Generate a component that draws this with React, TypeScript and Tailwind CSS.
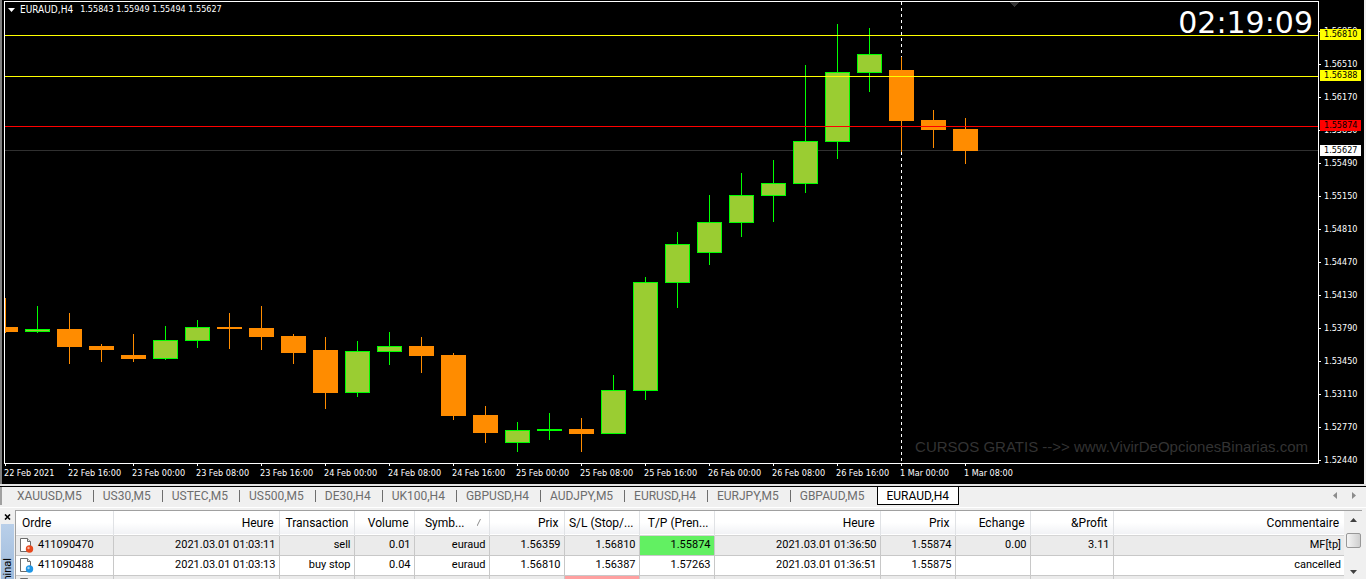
import React, { useState } from 'react';
import clsx from 'clsx';

// center x is 32px apart, all y values are measured from the top of the plot
type Candle = [up: boolean, high: number, top: number, bottom: number, low: number];

const CANDLES: Candle[] = [
  [false, 296, 325, 330, 331],
  [true, 304, 327, 330, 331],
  [false, 311, 327, 345, 362],
  [false, 342, 344, 348, 360],
  [false, 332, 353, 357, 360],
  [true, 324, 338, 357, 358],
  [true, 318, 325, 339, 346],
  [false, 311, 325, 327, 347],
  [false, 304, 326, 335, 348],
  [false, 332, 334, 351, 362],
  [false, 335, 348, 391, 407],
  [true, 339, 349, 391, 395],
  [true, 330, 344, 350, 363],
  [false, 335, 344, 354, 371],
  [false, 351, 353, 414, 418],
  [false, 404, 413, 431, 441],
  [true, 420, 428, 441, 450],
  [true, 411, 427, 429, 438],
  [false, 416, 427, 432, 450],
  [true, 373, 388, 432, 432],
  [true, 275, 280, 389, 398],
  [true, 230, 242, 281, 306],
  [true, 193, 220, 251, 263],
  [true, 171, 193, 221, 235],
  [true, 158, 181, 194, 220],
  [true, 63, 139, 182, 191],
  [true, 22, 70, 140, 157],
  [true, 26, 52, 71, 90],
  [false, 55, 68, 119, 150],
  [false, 108, 118, 128, 146],
  [false, 116, 127, 149, 162],
];

const PRICES = [
  '1.56850', '1.56510', '1.56170', '1.55830', '1.55490', '1.55150', '1.54810',
  '1.54470', '1.54130', '1.53790', '1.53450', '1.53110', '1.52770', '1.52440',
];

const TIMES = [
  '22 Feb 2021', '22 Feb 16:00', '23 Feb 00:00', '23 Feb 08:00', '23 Feb 16:00', '24 Feb 00:00',
  '24 Feb 08:00', '24 Feb 16:00', '25 Feb 00:00', '25 Feb 08:00', '25 Feb 16:00', '26 Feb 00:00',
  '26 Feb 08:00', '26 Feb 16:00', '1 Mar 00:00', '1 Mar 08:00',
];

const TABS = [
  'XAUUSD,M5', 'US30,M5', 'USTEC,M5', 'US500,M5', 'DE30,H4', 'UK100,H4',
  'GBPUSD,H4', 'AUDJPY,M5', 'EURUSD,H4', 'EURJPY,M5', 'GBPAUD,M5', 'EURAUD,H4',
];

const COLUMNS = [
  { label: 'Ordre', width: 'w-[97px]' },
  { label: 'Heure', width: 'w-[166px]' },
  { label: 'Transaction', width: 'w-[75px]' },
  { label: 'Volume', width: 'w-[60px]' },
  { label: 'Symb...', width: 'w-[75px]', sorted: true },
  { label: 'Prix', width: 'w-[75px]' },
  { label: 'S/L (Stop/...', width: 'w-[75px]' },
  { label: 'T/P (Pren...', width: 'w-[75px]' },
  { label: 'Heure', width: 'w-[166px]' },
  { label: 'Prix', width: 'w-[75px]' },
  { label: 'Echange', width: 'w-[75px]' },
  { label: '&Profit', width: 'w-[83px]' },
  { label: 'Commentaire', width: 'w-auto' },
];

const ORDERS = [
  {
    color: '#e8481c',
    cells: ['411090470', '2021.03.01 01:03:11', 'sell', '0.01', 'euraud', '1.56359', '1.56810', '1.55874', '2021.03.01 01:36:50', '1.55874', '0.00', '3.11', 'MF[tp]'],
    marks: { 7: 'bg-[#62f062]' } as Record<number, string>,
  },
  {
    color: '#1e96e6',
    cells: ['411090488', '2021.03.01 01:03:13', 'buy stop', '0.04', 'euraud', '1.56810', '1.56387', '1.57263', '2021.03.01 01:36:51', '1.55875', '', '', 'cancelled'],
    marks: {} as Record<number, string>,
  },
  {
    color: '#e8481c',
    cells: ['', '', '', '', '', '', '', '', '', '', '', '', ''],
    marks: { 6: 'bg-[#ffa0a0]' } as Record<number, string>,
  },
];

const OrderIcon = ({ color }: { color: string }) => (
  <svg width="15" height="16" viewBox="0 0 15 16" className="shrink-0">
    <path d="M1.5 1.5h7l3 3v10h-10z" fill="#fff" stroke="#6b6b6b" />
    <path d="M8.5 1.5v3h3" fill="#e4e4e4" stroke="#6b6b6b" />
    <circle cx="10.5" cy="12" r="3.7" fill={color} />
    <circle cx="9.5" cy="11" r="1.2" fill="#fff" opacity="0.6" />
  </svg>
);

const Candles = () => (
  <svg className="block w-full h-full" shapeRendering="crispEdges">
    <rect x="0" y="148" width="100%" height="1" fill="#303030" />
    <line x1="896.5" y1="0" x2="896.5" y2="461" stroke="#fff" strokeDasharray="3 3" />
    <path d="M1005 0h9v1h-1v1h-1v1h-1v1h-1v1h-1v-1h-1v-1h-1v-1h-1v-1h-1z" fill="#333" />
    {CANDLES.map(([up, high, top, bottom, low], i) => {
      const x = i * 32;
      return (
        <g key={i}>
          <rect x={x} y={high} width="1" height={low - high} fill={up ? '#00ff00' : '#ff8c00'} />
          <rect x={x - 12} y={top} width="25" height={bottom - top} fill={up ? '#00ff00' : '#ff8c00'} />
          {up && bottom - top > 2 && (
            <rect x={x - 11} y={top + 1} width="23" height={bottom - top - 2} fill="#9acd32" />
          )}
        </g>
      );
    })}
    <rect x="0" y="33" width="100%" height="1" fill="#ffff00" />
    <rect x="0" y="74" width="100%" height="1" fill="#ffff00" />
    <rect x="0" y="124" width="100%" height="1" fill="#ff0000" />
  </svg>
);

const PriceAxis = () => (
  <div className="relative pt-[14px] h-[483px]">
    {PRICES.map((price) => (
      <div key={price} className="h-[33px] flex items-center gap-[3px]">
        <span className="w-[2px] h-px bg-white" />
        <span>{price}</span>
      </div>
    ))}
    <span className="absolute left-px top-[28px] w-[41px] h-[11px] pl-1 bg-[#ffff00] text-black">1.56810</span>
    <span className="absolute left-px top-[69px] w-[41px] h-[11px] pl-1 bg-[#ffff00] text-black">1.56388</span>
    <span className="absolute left-px top-[119px] w-[41px] h-[11px] pl-1 bg-[#ff0000] text-black">1.55874</span>
    <span className="absolute left-px top-[144px] w-[41px] h-[11px] pl-1 bg-white text-black">1.55627</span>
  </div>
);

const Chart = () => (
  <section className="shrink-0 border-l-2 border-l-[#808080] border-r-2 border-r-[#f0f0f0] bg-black text-white pl-[2px] pt-px grid grid-cols-[minmax(0,1fr)_45px] font-['DejaVu_Sans_Condensed','Noto_Sans',sans-serif] text-[9px] leading-[11px] whitespace-nowrap">
    <div>
      <div className="relative h-[463px] border border-white">
        <Candles />
        <div className="absolute left-[3px] top-[2px] flex items-center gap-[5px]">
          <svg width="7" height="4" viewBox="0 0 7 4">
            <path d="M0 0h7L3.5 4z" fill="#fff" />
          </svg>
          <span className="text-[10px]">EURAUD,H4</span>
          <span className="pl-[2px]">1.55843 1.55949 1.55494 1.55627</span>
        </div>
        <div className="absolute right-[5px] top-[3px] font-['DejaVu_Sans',sans-serif] text-[30px] leading-9">02:19:09</div>
        <div className="absolute right-[10px] bottom-[6px] font-['Liberation_Sans',sans-serif] text-[15px] leading-5 text-[#333]">
          CURSOS GRATIS --&gt;&gt; www.VivirDeOpcionesBinarias.com
        </div>
      </div>
      <div className="h-5 flex">
        {TIMES.map((time) => (
          <div key={time} className="w-16 shrink-0">
            <div className="ml-px w-px h-[2px] bg-white" />
            <div className="pt-[2px]">{time}</div>
          </div>
        ))}
      </div>
    </div>
    <PriceAxis />
  </section>
);

const ChartTabs = () => {
  const [active, setActive] = useState('EURAUD,H4');

  return (
    <nav className="shrink-0 h-[26px] border-t-2 border-t-[#e3e3e3] bg-[#f0f0f0] text-xs text-[#6d6d6d]">
      <div className="flex h-[22px] border-t border-black border-b border-b-white">
        <div className="flex h-[18px] pl-[6px] flex-1 border-l-2 border-l-[#a0a0a0]">
          {TABS.map((tab, i) => (
            <button
              key={tab}
              onClick={() => setActive(tab)}
              className={clsx(
                'flex items-center',
                tab === active ? 'px-[9px] bg-white text-black border-x border-b border-black' : 'pl-[9px]',
              )}
            >
              {tab}
              {tab !== active && (
                <span className={clsx('ml-[11px] w-px h-3', TABS[i + 1] !== active && 'bg-[#6d6d6d]')} />
              )}
            </button>
          ))}
        </div>
        <div className="flex items-center gap-[15px] pr-[10px] pb-1">
          <button aria-label="Previous" className="w-1">
            <svg width="4" height="7" viewBox="0 0 4 7"><path d="M4 0v7L0 3.5z" fill="#8c8c8c" /></svg>
          </button>
          <button aria-label="Next" className="w-1">
            <svg width="4" height="7" viewBox="0 0 4 7"><path d="M0 0v7l4-3.5z" fill="#8c8c8c" /></svg>
          </button>
        </div>
      </div>
    </nav>
  );
};

const OrdersTable = () => (
  <table className="flex-1 table-fixed border-collapse text-[11px] text-black whitespace-nowrap w-full">
    <thead>
      <tr className="h-6 bg-linear-to-b from-white from-50% to-[#f1f2f5] border-b border-[#d5d5d5]">
        {COLUMNS.map((col, i) => (
          <th
            key={i}
            className={clsx(
              col.width,
              'p-0 font-normal text-xs border-r border-[#e0e2e5] last:border-r-0',
              i === 0 ? 'pl-[6px] text-left' : 'pr-[5px] text-right',
            )}
          >
            {col.sorted ? (
              <span className="flex items-center justify-end gap-3">
                {col.label}
                <svg width="7" height="7" viewBox="0 0 7 7"><path d="M0 7L3.5 0" stroke="#8c8c8c" fill="none" /></svg>
              </span>
            ) : (
              col.label
            )}
          </th>
        ))}
      </tr>
    </thead>
    <tbody>
      {ORDERS.map((order, row) => (
        <tr key={row} className={clsx('h-5 border-b border-[#c8c8c8]', row % 2 === 0 ? 'bg-[#ebebeb]' : 'bg-white')}>
          {order.cells.map((cell, i) => (
            <td
              key={i}
              className={clsx(
                'p-0 border-r border-[#c8c8c8] last:border-r-0',
                i === 0 ? 'pl-[3px]' : 'pt-px pr-[3px] text-right',
                order.marks[i],
              )}
            >
              {i === 0 ? (
                <span className="flex items-center gap-1">
                  <OrderIcon color={order.color} />
                  {cell}
                </span>
              ) : (
                cell
              )}
            </td>
          ))}
        </tr>
      ))}
    </tbody>
  </table>
);

const Terminal = () => (
  <section className="flex-1 min-h-0 flex overflow-hidden bg-[#f0f0f0] pr-1">
    <div className="w-[15px] shrink-0 flex flex-col pl-px pr-px">
      <button aria-label="Close" className="h-[14px] flex items-center justify-center">
        <svg width="7" height="6" viewBox="0 0 7 6"><path d="M1 0.5l5 5M6 0.5l-5 5" stroke="#000" strokeWidth="1.6" /></svg>
      </button>
      <div className="flex-1 min-h-0 bg-linear-to-b from-[#b9cfe9] to-[#9fbbdc] text-[11px] leading-[13px] pt-[34px]">
        <span className="block [writing-mode:vertical-rl] rotate-180">Terminal</span>
      </div>
    </div>
    <div className="flex-1 min-w-0 flex items-start border-t border-l border-[#a0a0a0] bg-white">
      <OrdersTable />
      <div className="w-[18px] shrink-0 h-full flex flex-col items-center bg-[#f0f0f0] pt-[7px] pb-[5px]">
        <svg width="7" height="4" viewBox="0 0 7 4"><path d="M0 4h7L3.5 0z" fill="#404040" /></svg>
        <div className="mt-[11px] w-[15px] h-[15px] rounded-xs border border-[#989898] bg-linear-to-r from-[#f5f5f5] to-[#cfcfcf]" />
        <svg width="7" height="4" viewBox="0 0 7 4" className="mt-auto"><path d="M0 0h7L3.5 4z" fill="#404040" /></svg>
      </div>
    </div>
  </section>
);

const App: React.FC = () => {
  return (
    <div className="h-screen flex flex-col overflow-hidden bg-[#f0f0f0] font-['Roboto','Noto_Sans',sans-serif]">
      <Chart />
      <ChartTabs />
      <Terminal />
    </div>
  );
};

export default App;
